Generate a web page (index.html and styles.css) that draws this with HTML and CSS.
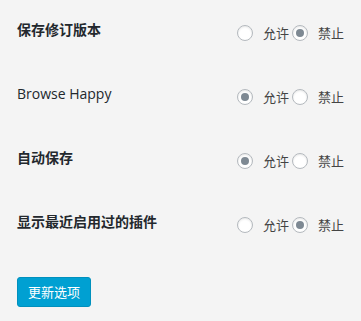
FILE: index.html
```html
<!DOCTYPE html>
<html lang="zh-CN">
  <head>
    <meta charset="UTF-8" />
    <meta name="viewport" content="width=device-width, initial-scale=1.0" />
    <title>选项</title>
    <link rel="stylesheet" href="styles.css">
  </head>

  <body>
    <form class="options">
      <div class="row">
        <span class="row-label">保存修订版本</span>
        <div class="choices">
          <label><input type="radio" name="revisions" />允许</label>
          <label><input type="radio" name="revisions" checked />禁止</label>
        </div>
      </div>
      <div class="row">
        <span class="row-label latin">Browse Happy</span>
        <div class="choices">
          <label><input type="radio" name="happy" checked />允许</label>
          <label><input type="radio" name="happy" />禁止</label>
        </div>
      </div>
      <div class="row">
        <span class="row-label">自动保存</span>
        <div class="choices">
          <label><input type="radio" name="autosave" checked />允许</label>
          <label><input type="radio" name="autosave" />禁止</label>
        </div>
      </div>
      <div class="row">
        <span class="row-label">显示最近启用过的插件</span>
        <div class="choices">
          <label><input type="radio" name="recent" />允许</label>
          <label><input type="radio" name="recent" checked />禁止</label>
        </div>
      </div>
      <button type="button" class="button-primary">更新选项</button>
    </form>
  </body>
</html>
```

FILE: styles.css
```css
body {
  margin: 0;
  background-color: #f4f4f4;
  color: #444;
  font-family: "Open Sans", "Noto Sans CJK SC", sans-serif;
}

.options {
  padding: 0 17px;
}

.row {
  height: 64px;
  display: flex;
  justify-content: space-between;
  align-items: flex-start;
}

.row-label {
  padding-top: 21px;
  font-size: 14px;
  line-height: 18px;
  font-weight: 600;
  color: #23282d;
}

.row-label.latin {
  font-weight: 400;
}

.choices {
  padding-top: 24px;
  display: flex;
  gap: 3px;
  font-size: 13px;
  line-height: 18px;
}

.choices label {
  display: flex;
  align-items: center;
}

.choices input {
  appearance: none;
  -webkit-appearance: none;
  width: 16px;
  height: 16px;
  margin: 0 10px 0 0;
  border: 1px solid #b4b9be;
  border-radius: 50%;
  background: #fff;
  box-shadow: inset 0 1px 2px rgba(0, 0, 0, 0.1);
  display: flex;
  align-items: center;
  justify-content: center;
}

.choices input:checked::before {
  content: "";
  width: 8px;
  height: 8px;
  border-radius: 50%;
  background: #7e8993;
}

.button-primary {
  margin-top: 21px;
  height: 30px;
  padding: 0 10px;
  border: 1px solid #0090bd;
  border-radius: 3px;
  background: #00a0d2;
  color: #fff;
  font-family: "Open Sans", "Noto Sans CJK SC", sans-serif;
  font-size: 13px;
  line-height: 28px;
}
```
